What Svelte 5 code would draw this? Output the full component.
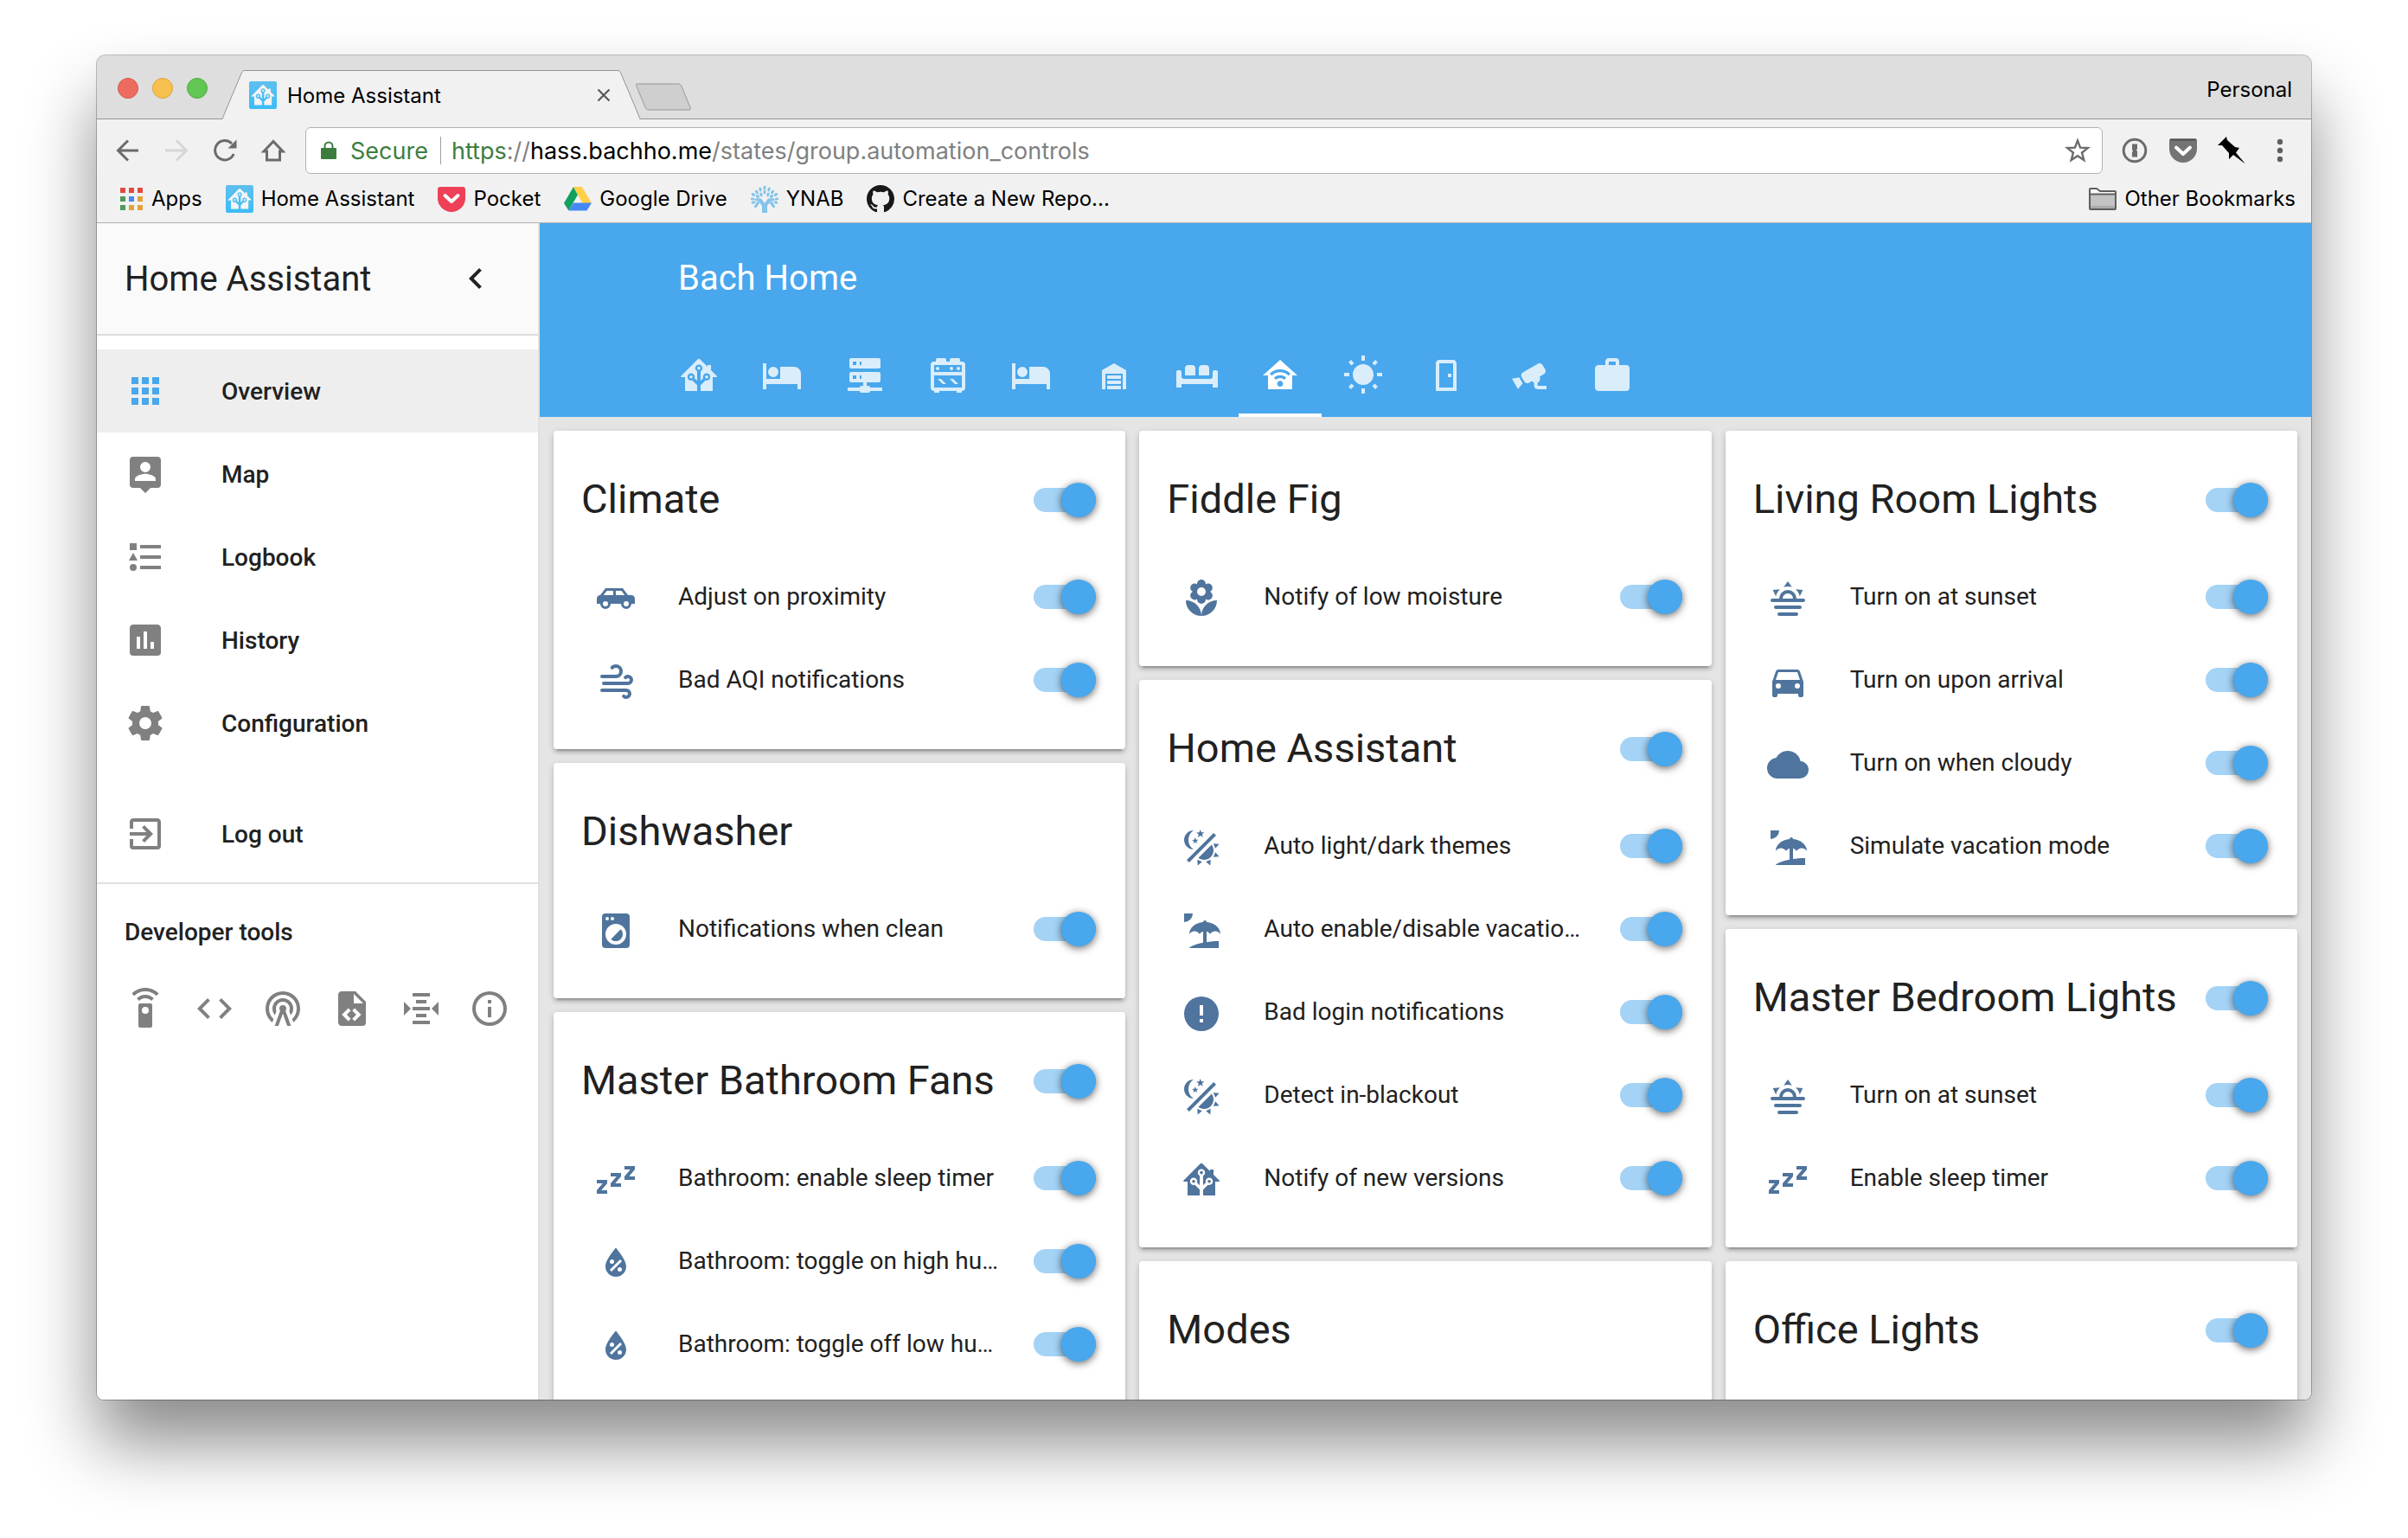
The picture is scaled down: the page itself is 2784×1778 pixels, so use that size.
<script lang="ts">
  type Row = { icon: string; name: string };
  type Card = { title: string; toggle: boolean; rows: Row[] };

  // Icon outlines on a 24 x 24 grid
  const icons: Record<string, string> = {
    chevron: 'M15.41,7.41L14,6L8,12L14,18L15.41,16.59L10.83,12L15.41,7.41Z',
    apps: 'M16,20H20V16H16M16,14H20V10H16M10,8H14V4H10M16,8H20V4H16M10,14H14V10H10M4,14H8V10H4M4,20H8V16H4M10,20H14V16H10M4,8H8V4H4V8Z',
    map: 'M19,2H5A2,2 0 0,0 3,4V18A2,2 0 0,0 5,20H9L12,23L15,20H19A2,2 0 0,0 21,18V4A2,2 0 0,0 19,2M12,5A3,3 0 0,1 15,8A3,3 0 0,1 12,11A3,3 0 0,1 9,8A3,3 0 0,1 12,5M18,16H6V15C6,13 10,11.9 12,11.9C14,11.9 18,13 18,15V16Z',
    logbook: 'M5,9.5L7.5,14H2.5L5,9.5M3,4H7V8H3V4M5,20A2,2 0 0,0 7,18A2,2 0 0,0 5,16A2,2 0 0,0 3,18A2,2 0 0,0 5,20M9,5V7H21V5H9M9,19H21V17H9V19M9,11V13H21V11H9Z',
    history: 'M17,17H15V13H17M13,17H11V7H13M9,17H7V10H9M19,3H5C3.89,3 3,3.89 3,5V19A2,2 0 0,0 5,21H19A2,2 0 0,0 21,19V5C21,3.89 20.1,3 19,3Z',
    settings: 'M12,15.5A3.5,3.5 0 0,1 8.5,12A3.5,3.5 0 0,1 12,8.5A3.5,3.5 0 0,1 15.5,12A3.5,3.5 0 0,1 12,15.5M19.43,12.97C19.47,12.65 19.5,12.33 19.5,12C19.5,11.67 19.47,11.34 19.43,11L21.54,9.37C21.73,9.22 21.78,8.95 21.66,8.73L19.66,5.27C19.54,5.05 19.27,4.96 19.05,5.05L16.56,6.05C16.04,5.66 15.5,5.32 14.87,5.07L14.5,2.42C14.46,2.18 14.25,2 14,2H10C9.75,2 9.54,2.18 9.5,2.42L9.13,5.07C8.5,5.32 7.96,5.66 7.44,6.05L4.95,5.05C4.73,4.96 4.46,5.05 4.34,5.27L2.34,8.73C2.21,8.95 2.27,9.22 2.46,9.37L4.57,11C4.53,11.34 4.5,11.67 4.5,12C4.5,12.33 4.53,12.65 4.57,12.97L2.46,14.63C2.27,14.78 2.21,15.05 2.34,15.27L4.34,18.73C4.46,18.95 4.73,19.03 4.95,18.95L7.44,17.94C7.96,18.34 8.5,18.68 9.13,18.93L9.5,21.58C9.54,21.82 9.75,22 10,22H14C14.25,22 14.46,21.82 14.5,21.58L14.87,18.93C15.5,18.67 16.04,18.34 16.56,17.94L19.05,18.95C19.27,19.03 19.54,18.95 19.66,18.73L21.66,15.27C21.78,15.05 21.73,14.78 21.54,14.63L19.43,12.97Z',
    logout: 'M19,3H5C3.89,3 3,3.89 3,5V9H5V5H19V19H5V15H3V19A2,2 0 0,0 5,21H19A2,2 0 0,0 21,19V5C21,3.89 20.1,3 19,3M10.08,15.58L11.5,17L16.5,12L11.5,7L10.08,8.41L12.67,11H3V13H12.67L10.08,15.58Z',
    remote: 'M12,0C8.96,0 6.21,1.23 4.22,3.22L5.63,4.63C7.26,3 9.5,2 12,2C14.5,2 16.74,3 18.36,4.64L19.77,3.23C17.79,1.23 15.04,0 12,0M7.05,6.05L8.46,7.46C9.37,6.56 10.62,6 12,6C13.38,6 14.63,6.56 15.54,7.46L16.95,6.05C15.68,4.78 13.93,4 12,4C10.07,4 8.32,4.78 7.05,6.05M12,15A2,2 0 0,1 10,13A2,2 0 0,1 12,11A2,2 0 0,1 14,13A2,2 0 0,1 12,15M15,9H9A1,1 0 0,0 8,10V22A1,1 0 0,0 9,23H15A1,1 0 0,0 16,22V10A1,1 0 0,0 15,9Z',
    code: 'M14.6,16.6L19.2,12L14.6,7.4L16,6L22,12L16,18L14.6,16.6M9.4,16.6L4.8,12L9.4,7.4L8,6L2,12L8,18L9.4,16.6Z',
    radio: 'M12,10A2,2 0 0,1 14,12C14,12.5 13.82,12.94 13.53,13.29L16.7,22H14.57L12,14.93L9.43,22H7.3L10.47,13.29C10.18,12.94 10,12.5 10,12A2,2 0 0,1 12,10M12,8A4,4 0 0,0 8,12C8,12.5 8.1,13 8.28,13.46L7.4,15.86C6.53,14.81 6,13.47 6,12A6,6 0 0,1 12,6A6,6 0 0,1 18,12C18,13.47 17.47,14.81 16.6,15.86L15.72,13.46C15.9,13 16,12.5 16,12A4,4 0 0,0 12,8M12,4A8,8 0 0,0 4,12C4,14.36 5,16.5 6.64,17.94L5.92,19.94C3.54,18.11 2,15.23 2,12A10,10 0 0,1 12,2A10,10 0 0,1 22,12C22,15.23 20.46,18.11 18.08,19.94L17.36,17.94C19,16.5 20,14.36 20,12A8,8 0 0,0 12,4Z',
    fileCode: 'M13,9H18.5L13,3.5V9M6,2H14L20,8V20A2,2 0 0,1 18,22H6C4.89,22 4,21.1 4,20V4C4,2.89 4.89,2 6,2M6.12,15.5L9.86,19.24L11.28,17.83L8.95,15.5L11.28,13.17L9.86,11.76L6.12,15.5M17.28,15.5L13.54,11.76L12.12,13.17L14.45,15.5L12.12,17.83L13.54,19.24L17.28,15.5Z',
    mqtt: 'M2,8L6,12L2,16V8M22,8V16L18,12L22,8M7,3H17V5H7V3M9,7H15V9H9V7M7,11H17V13H7V11M9,15H15V17H9V15M7,19H17V21H7V19Z',
    info: 'M11,9H13V7H11M12,20C7.59,20 4,16.41 4,12C4,7.59 7.59,4 12,4C16.41,4 20,7.59 20,12C20,16.41 16.41,20 12,20M12,2A10,10 0 0,0 2,12A10,10 0 0,0 12,22A10,10 0 0,0 22,12A10,10 0 0,0 12,2M11,17H13V11H11V17Z',
    hass: 'M21.8,13H20V21H13V17.67L15.79,14.88L16.5,15C17.66,15 18.6,14.06 18.6,12.9C18.6,11.74 17.66,10.8 16.5,10.8A2.1,2.1 0 0,0 14.4,12.9L14.5,13.61L13,15.13V9.65C13.66,9.29 14.1,8.6 14.1,7.8A2.1,2.1 0 0,0 12,5.7A2.1,2.1 0 0,0 9.9,7.8C9.9,8.6 10.34,9.29 11,9.65V15.13L9.5,13.61L9.6,12.9A2.1,2.1 0 0,0 7.5,10.8A2.1,2.1 0 0,0 5.4,12.9A2.1,2.1 0 0,0 7.5,15L8.21,14.88L11,17.67V21H4V13H2.25C1.83,13 1.42,13 1.42,12.79C1.43,12.57 1.85,12.15 2.28,11.72L11,3C11.33,2.67 11.67,2.33 12,2.33C12.33,2.33 12.67,2.67 13,3L17,7V6H19V9L21.78,11.78C22.18,12.18 22.59,12.59 22.6,12.8C22.6,13 22.2,13 21.8,13M7.5,12A0.9,0.9 0 0,1 8.4,12.9A0.9,0.9 0 0,1 7.5,13.8A0.9,0.9 0 0,1 6.6,12.9A0.9,0.9 0 0,1 7.5,12M16.5,12C17,12 17.4,12.4 17.4,12.9C17.4,13.4 17,13.8 16.5,13.8A0.9,0.9 0 0,1 15.6,12.9A0.9,0.9 0 0,1 16.5,12M12,6.9C12.5,6.9 12.9,7.3 12.9,7.8C12.9,8.3 12.5,8.7 12,8.7C11.5,8.7 11.1,8.3 11.1,7.8C11.1,7.3 11.5,6.9 12,6.9Z',
    bed: 'M19,7H11V14H3V5H1V20H3V17H21V20H23V11A4,4 0 0,0 19,7M7,13A3,3 0 0,0 10,10A3,3 0 0,0 7,7A3,3 0 0,0 4,10A3,3 0 0,0 7,13Z',
    server: 'M13,18H14A1,1 0 0,1 15,19H22V21H15A1,1 0 0,1 14,22H10A1,1 0 0,1 9,21H2V19H9A1,1 0 0,1 10,18H11V16H4A1,1 0 0,1 3,15V11A1,1 0 0,1 4,10H20A1,1 0 0,1 21,11V15A1,1 0 0,1 20,16H13V18M4,2H20A1,1 0 0,1 21,3V7A1,1 0 0,1 20,8H4A1,1 0 0,1 3,7V3A1,1 0 0,1 4,2M9,6H10V4H9V6M9,14H10V12H9V14M5,4V6H7V4H5M5,12V14H7V12H5Z',
    stove: 'M6,14H8L11,17H9L6,14M4,4H5V3A1,1 0 0,1 6,2H10A1,1 0 0,1 11,3V4H13V3A1,1 0 0,1 14,2H18A1,1 0 0,1 19,3V4H20A2,2 0 0,1 22,6V19A2,2 0 0,1 20,21V22H17V21H7V22H4V21A2,2 0 0,1 2,19V6A2,2 0 0,1 4,4M18,7A1,1 0 0,1 19,8A1,1 0 0,1 18,9A1,1 0 0,1 17,8A1,1 0 0,1 18,7M14,7A1,1 0 0,1 15,8A1,1 0 0,1 14,9A1,1 0 0,1 13,8A1,1 0 0,1 14,7M20,6H4V10H20V6M4,19H20V12H4V19M6,7A1,1 0 0,1 7,8A1,1 0 0,1 6,9A1,1 0 0,1 5,8A1,1 0 0,1 6,7M13,14H15L18,17H16L13,14Z',
    garage: 'M19,20H17V11H7V20H5V9L12,5L19,9V20M8,12H16V14H8V12M8,15H16V17H8V15M16,18V20H8V18H16Z',
    sofa: 'M0,10A1,1 0 0,1 1,9H2A1,1 0 0,1 3,10V12.5A1.5,1.5 0 0,0 4.5,14H19.5A1.5,1.5 0 0,0 21,12.5V10A1,1 0 0,1 22,9H23A1,1 0 0,1 24,10V19H21V17H3V19H0V10M5,12V8A2,2 0 0,1 7,6H9A2,2 0 0,1 11,8V12H5M13,12V8A2,2 0 0,1 15,6H17A2,2 0 0,1 19,8V12H13Z',
    automation: 'M12,3L2,12H5V20H19V12H22L12,3M12,8.5C14.34,8.5 16.46,9.43 18,10.94L16.8,12.12C15.58,10.91 13.88,10.17 12,10.17C10.12,10.17 8.42,10.91 7.2,12.12L6,10.94C7.54,9.43 9.66,8.5 12,8.5M12,11.83C13.4,11.83 14.67,12.39 15.6,13.3L14.4,14.47C13.79,13.87 12.94,13.5 12,13.5C11.06,13.5 10.21,13.87 9.6,14.47L8.4,13.3C9.33,12.39 10.6,11.83 12,11.83M12,15.17C12.94,15.17 13.7,15.91 13.7,16.83C13.7,17.75 12.94,18.5 12,18.5C11.06,18.5 10.3,17.75 10.3,16.83C10.3,15.91 11.06,15.17 12,15.17Z',
    sun: 'M3.55,18.54L4.96,19.95L6.76,18.16L5.34,16.74M11,22.45C11.32,22.45 13,22.45 13,22.45V19.5H11M12,5.5A6,6 0 0,0 6,11.5A6,6 0 0,0 12,17.5A6,6 0 0,0 18,11.5C18,8.18 15.31,5.5 12,5.5M20,12.5H23V10.5H20M17.24,18.16L19.04,19.95L20.45,18.54L18.66,16.74M20.45,4.46L19.04,3.05L17.24,4.84L18.66,6.26M13,0.55H11V3.5H13M4,10.5H1V12.5H4M6.76,4.84L4.96,3.05L3.55,4.46L5.34,6.26L6.76,4.84Z',
    door: 'M8,3C6.89,3 6,3.89 6,5V21H18V5C18,3.89 17.11,3 16,3H8M8,5V19H16V5H8M13,11H15V13H13V11Z',
    cctv: 'M18.15,4.94C17.77,4.91 17.37,5 17,5.2L8.35,10.2C7.39,10.76 7.07,12 7.62,12.94L9.12,15.53C9.67,16.5 10.89,16.82 11.85,16.27L13.65,15.23C13.92,15.69 14.32,16.06 14.81,16.27V18.04C14.81,19.13 15.7,20 16.81,20H22V18.04H16.81V16.27C17.72,15.87 18.31,14.97 18.31,14C18.31,13.54 18.19,13.11 17.97,12.73L20.5,11.27C21.47,10.71 21.8,9.5 21.24,8.53L19.74,5.94C19.4,5.34 18.79,5 18.15,4.94M6.22,13.17L2,13.87L2.75,15.17L4.75,18.63L5.5,19.93L8.22,16.63L6.22,13.17Z',
    briefcase: 'M10,2H14A2,2 0 0,1 16,4V6H20A2,2 0 0,1 22,8V19A2,2 0 0,1 20,21H4C2.89,21 2,20.1 2,19V8C2,6.89 2.89,6 4,6H8V4C8,2.89 8.89,2 10,2M14,6V4H10V6H14Z',
    carSide: 'M16,6L19,10H21C22.11,10 23,10.89 23,12V15H21A3,3 0 0,1 18,18A3,3 0 0,1 15,15H9A3,3 0 0,1 6,18A3,3 0 0,1 3,15H1V12C1,10.89 1.89,10 3,10L6,6H16M10.5,7.5H6.75L4.86,10H10.5V7.5M12,7.5V10H17.14L15.25,7.5H12M6,13.5A1.5,1.5 0 0,0 4.5,15A1.5,1.5 0 0,0 6,16.5A1.5,1.5 0 0,0 7.5,15A1.5,1.5 0 0,0 6,13.5M18,13.5A1.5,1.5 0 0,0 16.5,15A1.5,1.5 0 0,0 18,16.5A1.5,1.5 0 0,0 19.5,15A1.5,1.5 0 0,0 18,13.5Z',
    wind: 'M4,10A1,1 0 0,1 3,9A1,1 0 0,1 4,8H12A2,2 0 0,0 14,6A2,2 0 0,0 12,4C11.45,4 10.95,4.22 10.59,4.59C10.2,5 9.56,5 9.17,4.59C8.78,4.2 8.78,3.56 9.17,3.17C9.9,2.45 10.9,2 12,2A4,4 0 0,1 16,6A4,4 0 0,1 12,10H4M19,12A1,1 0 0,0 20,11A1,1 0 0,0 19,10C18.72,10 18.47,10.11 18.29,10.29C17.9,10.68 17.27,10.68 16.88,10.29C16.5,9.9 16.5,9.27 16.88,8.88C17.42,8.34 18.17,8 19,8A3,3 0 0,1 22,11A3,3 0 0,1 19,14H5A1,1 0 0,1 4,13A1,1 0 0,1 5,12H19M18,18H4A1,1 0 0,1 3,17A1,1 0 0,1 4,16H18A3,3 0 0,1 21,19A3,3 0 0,1 18,22C17.17,22 16.42,21.66 15.88,21.12C15.5,20.73 15.5,20.1 15.88,19.71C16.27,19.32 16.9,19.32 17.29,19.71C17.47,19.89 17.72,20 18,20A1,1 0 0,0 19,19A1,1 0 0,0 18,18Z',
    washer: 'M14.83,11.17C16.39,12.73 16.39,15.26 14.83,16.83C13.26,18.39 10.73,18.39 9.17,16.83L14.83,11.17M6,2H18A2,2 0 0,1 20,4V20A2,2 0 0,1 18,22H6A2,2 0 0,1 4,20V4A2,2 0 0,1 6,2M7,4A1,1 0 0,0 6,5A1,1 0 0,0 7,6A1,1 0 0,0 8,5A1,1 0 0,0 7,4M10,4A1,1 0 0,0 9,5A1,1 0 0,0 10,6A1,1 0 0,0 11,5A1,1 0 0,0 10,4M12,8A6,6 0 0,0 6,14A6,6 0 0,0 12,20A6,6 0 0,0 18,14A6,6 0 0,0 12,8Z',
    sleep: 'M23,12H17V10L20.39,6H17V4H23V6L19.62,10H23V12M15,16H9V14L12.39,10H9V8H15V10L11.62,14H15V16M7,20H1V18L4.39,14H1V12H7V14L3.62,18H7V20Z',
    humidity: 'M12,3.25C12,3.25 6,10 6,14C6,17.32 8.69,20 12,20A6,6 0 0,0 18,14C18,10 12,3.25 12,3.25M14.47,9.97L15.53,11.03L9.53,17.03L8.47,15.97M9.75,10A1.25,1.25 0 0,1 11,11.25A1.25,1.25 0 0,1 9.75,12.5A1.25,1.25 0 0,1 8.5,11.25A1.25,1.25 0 0,1 9.75,10M14.25,14.5A1.25,1.25 0 0,1 15.5,15.75A1.25,1.25 0 0,1 14.25,17A1.25,1.25 0 0,1 13,15.75A1.25,1.25 0 0,1 14.25,14.5Z',
    flower: 'M3,13A9,9 0 0,0 12,22C12,17 7.97,13 3,13M12,5.5A2.5,2.5 0 0,1 14.5,8A2.5,2.5 0 0,1 12,10.5A2.5,2.5 0 0,1 9.5,8A2.5,2.5 0 0,1 12,5.5M5.6,10.25A2.5,2.5 0 0,0 8.1,12.75C8.63,12.75 9.12,12.58 9.5,12.31C9.5,12.37 9.5,12.43 9.5,12.5A2.5,2.5 0 0,0 12,15A2.5,2.5 0 0,0 14.5,12.5C14.5,12.43 14.5,12.37 14.5,12.31C14.88,12.58 15.37,12.75 15.9,12.75C17.28,12.75 18.4,11.63 18.4,10.25C18.4,9.25 17.81,8.4 16.97,8C17.81,7.6 18.4,6.74 18.4,5.75C18.4,4.37 17.28,3.25 15.9,3.25C15.37,3.25 14.88,3.41 14.5,3.69C14.5,3.63 14.5,3.56 14.5,3.5A2.5,2.5 0 0,0 12,1A2.5,2.5 0 0,0 9.5,3.5C9.5,3.56 9.5,3.63 9.5,3.69C9.12,3.41 8.63,3.25 8.1,3.25A2.5,2.5 0 0,0 5.6,5.75C5.6,6.74 6.19,7.6 7.03,8C6.19,8.4 5.6,9.25 5.6,10.25M12,22A9,9 0 0,0 21,13C16,13 12,17 12,22Z',
    theme: 'M7.5,2C5.71,3.15 4.5,5.18 4.5,7.5C4.5,9.82 5.71,11.85 7.53,13C4.46,13 2,10.54 2,7.5A5.5,5.5 0 0,1 7.5,2M19.07,3.5L20.5,4.93L4.93,20.5L3.5,19.07L19.07,3.5M12.89,5.93L11.41,5L9.97,6L10.39,4.3L9,3.24L10.75,3.12L11.33,1.47L12,3.1L13.73,3.13L12.38,4.26L12.89,5.93M9.59,9.54L8.43,8.81L7.31,9.59L7.65,8.27L6.56,7.44L7.92,7.35L8.37,6.06L8.88,7.33L10.24,7.36L9.19,8.23L9.59,9.54M19,13.5A5.5,5.5 0 0,1 13.5,19C12.28,19 11.15,18.6 10.24,17.93L17.93,10.24C18.6,11.15 19,12.28 19,13.5M14.6,20.08L17.37,18.93L17.13,22.28L14.6,20.08M18.93,17.38L20.08,14.61L22.28,17.15L18.93,17.38M20.08,12.42L18.94,9.64L22.28,9.88L20.08,12.42M9.63,18.93L12.4,20.08L9.87,22.27L9.63,18.93Z',
    beach: 'M15,18.54C17.13,18.21 19.5,18 22,18V22H5C5,21.35 8.2,19.86 13,18.9V12.4C12.16,12.65 11.45,13.21 11,13.95C10.39,12.93 9.27,12.25 8,12.25C6.73,12.25 5.61,12.93 5,13.95C5.03,10.37 8.5,7.43 13,7.04V7A1,1 0 0,1 14,6A1,1 0 0,1 15,7V7.04C19.5,7.43 22.96,10.37 23,13.95C22.39,12.93 21.27,12.25 20,12.25C18.73,12.25 17.61,12.93 17,13.95C16.55,13.21 15.84,12.65 15,12.39V18.54M7,2A5,5 0 0,1 2,7V2H7Z',
    alert: 'M13,13H11V7H13M13,17H11V15H13M12,2A10,10 0 0,0 2,12A10,10 0 0,0 12,22A10,10 0 0,0 22,12A10,10 0 0,0 12,2Z',
    sunset: 'M3,12H7A5,5 0 0,1 12,7A5,5 0 0,1 17,12H21A1,1 0 0,1 22,13A1,1 0 0,1 21,14H3A1,1 0 0,1 2,13A1,1 0 0,1 3,12M5,16H19A1,1 0 0,1 20,17A1,1 0 0,1 19,18H5A1,1 0 0,1 4,17A1,1 0 0,1 5,16M17,20A1,1 0 0,1 18,21A1,1 0 0,1 17,22H7A1,1 0 0,1 6,21A1,1 0 0,1 7,20H17M15,12A3,3 0 0,0 12,9A3,3 0 0,0 9,12H15M12,2L14.39,5.42C13.65,5.15 12.84,5 12,5C11.16,5 10.35,5.15 9.61,5.42L12,2M3.34,7L7.5,6.65C6.9,7.16 6.36,7.78 5.94,8.5C5.5,9.24 5.25,10 5.11,10.79L3.34,7M20.65,7L18.88,10.79C18.74,10 18.47,9.23 18.05,8.5C17.63,7.78 17.1,7.15 16.5,6.64L20.65,7Z',
    car: 'M5,11L6.5,6.5H17.5L19,11M17.5,16A1.5,1.5 0 0,1 16,14.5A1.5,1.5 0 0,1 17.5,13A1.5,1.5 0 0,1 19,14.5A1.5,1.5 0 0,1 17.5,16M6.5,16A1.5,1.5 0 0,1 5,14.5A1.5,1.5 0 0,1 6.5,13A1.5,1.5 0 0,1 8,14.5A1.5,1.5 0 0,1 6.5,16M18.92,6C18.72,5.42 18.16,5 17.5,5H6.5C5.84,5 5.28,5.42 5.08,6L3,12V20A1,1 0 0,0 4,21H5A1,1 0 0,0 6,20V19H18V20A1,1 0 0,0 19,21H20A1,1 0 0,0 21,20V12L18.92,6Z',
    cloud: 'M19.35,10.03C18.67,6.59 15.64,4 12,4C9.11,4 6.6,5.64 5.35,8.03C2.34,8.36 0,10.9 0,14A6,6 0 0,0 6,20H19A5,5 0 0,0 24,15C24,12.36 21.95,10.22 19.35,10.03Z'
  };

  const menu = [
    { icon: 'apps', label: 'Overview' },
    { icon: 'map', label: 'Map' },
    { icon: 'logbook', label: 'Logbook' },
    { icon: 'history', label: 'History' },
    { icon: 'settings', label: 'Configuration' }
  ];

  const tools = [
    { icon: 'remote', label: 'Services' },
    { icon: 'code', label: 'States' },
    { icon: 'radio', label: 'Events' },
    { icon: 'fileCode', label: 'Templates' },
    { icon: 'mqtt', label: 'MQTT' },
    { icon: 'info', label: 'Info' }
  ];

  const views = [
    { icon: 'hass', label: 'Home' },
    { icon: 'bed', label: 'Bedroom' },
    { icon: 'server', label: 'Network' },
    { icon: 'stove', label: 'Kitchen' },
    { icon: 'bed', label: 'Guest room' },
    { icon: 'garage', label: 'Garage' },
    { icon: 'sofa', label: 'Living room' },
    { icon: 'automation', label: 'Automation controls' },
    { icon: 'sun', label: 'Weather' },
    { icon: 'door', label: 'Doors' },
    { icon: 'cctv', label: 'Cameras' },
    { icon: 'briefcase', label: 'Work' }
  ];

  const columns: Card[][] = [
    [
      {
        title: 'Climate',
        toggle: true,
        rows: [
          { icon: 'carSide', name: 'Adjust on proximity' },
          { icon: 'wind', name: 'Bad AQI notifications' }
        ]
      },
      {
        title: 'Dishwasher',
        toggle: false,
        rows: [{ icon: 'washer', name: 'Notifications when clean' }]
      },
      {
        title: 'Master Bathroom Fans',
        toggle: true,
        rows: [
          { icon: 'sleep', name: 'Bathroom: enable sleep timer' },
          { icon: 'humidity', name: 'Bathroom: toggle on high humidity' },
          { icon: 'humidity', name: 'Bathroom: toggle off low humidity' }
        ]
      }
    ],
    [
      {
        title: 'Fiddle Fig',
        toggle: false,
        rows: [{ icon: 'flower', name: 'Notify of low moisture' }]
      },
      {
        title: 'Home Assistant',
        toggle: true,
        rows: [
          { icon: 'theme', name: 'Auto light/dark themes' },
          { icon: 'beach', name: 'Auto enable/disable vacation mode' },
          { icon: 'alert', name: 'Bad login notifications' },
          { icon: 'theme', name: 'Detect in-blackout' },
          { icon: 'hass', name: 'Notify of new versions' }
        ]
      },
      { title: 'Modes', toggle: false, rows: [] }
    ],
    [
      {
        title: 'Living Room Lights',
        toggle: true,
        rows: [
          { icon: 'sunset', name: 'Turn on at sunset' },
          { icon: 'car', name: 'Turn on upon arrival' },
          { icon: 'cloud', name: 'Turn on when cloudy' },
          { icon: 'beach', name: 'Simulate vacation mode' }
        ]
      },
      {
        title: 'Master Bedroom Lights',
        toggle: true,
        rows: [
          { icon: 'sunset', name: 'Turn on at sunset' },
          { icon: 'sleep', name: 'Enable sleep timer' }
        ]
      },
      { title: 'Office Lights', toggle: true, rows: [] }
    ]
  ];

  const appColors = ['#e04b3f', '#e04b3f', '#e04b3f', '#4f9a5b', '#4688f1', '#e2a33a', '#4f9a5b', '#e2a33a', '#e2a33a'];
  // Leaf positions of the tree logo: x, y, rotation
  const leaves = [
    [16, 3, 0], [11, 5, -20], [21, 5, 20], [7, 8, -40], [25, 8, 40], [16, 8, 0], [12, 11, -20], [20, 11, 20],
    [3, 11, -60], [29, 11, 60], [8, 13, -45], [24, 13, 45], [2, 16, -90], [30, 16, 90], [7, 17, -80], [25, 17, 80],
    [3, 20, -110], [29, 20, 110], [8, 21, -120], [24, 21, 120], [6, 24, -130], [26, 24, 130]
  ];

  let activeView = $state(7);
  let activeMenu = $state('Overview');
  let address = $state('https://hass.bachho.me/states/group.automation_controls');
</script>

{#snippet icon(name: string)}
  <svg class="icon" viewBox="0 0 24 24" aria-hidden="true">
    <path d={icons[name]} fill-rule={['hass', 'washer', 'stove'].includes(name) ? 'nonzero' : 'evenodd'} />
  </svg>
{/snippet}

{#snippet hassLogo()}
  <svg class="fav" viewBox="0 0 32 32" aria-hidden="true">
    <defs>
      <linearGradient id="sky" x1="0" y1="0" x2="0" y2="1">
        <stop offset="0" stop-color="#5fc0ee" />
        <stop offset="1" stop-color="#3cbcf8" />
      </linearGradient>
    </defs>
    <rect width="32" height="32" rx="2" fill="url(#sky)" />
    <path transform="translate(1 1) scale(1.26)" d={icons.hass} fill="#f4f4f4" />
  </svg>
{/snippet}

<div class="desktop">
  <div class="window">
    <header class="strip">
      <div class="lights">
        <button class="light red" aria-label="Close window"></button>
        <button class="light amber" aria-label="Minimise window"></button>
        <button class="light green" aria-label="Zoom window"></button>
      </div>
      <div class="tab">
        <svg class="slope" viewBox="0 0 27 57" aria-hidden="true">
          <path d="M0,57C2,57 2,55 3,52L23,4C24,1 25,0 27,0V57Z" fill="#f1f1f1" />
          <path d="M0,56.5C2,56 2,54 3,51.5L23,4C24,1.5 25,.5 27,.5" fill="none" stroke="#949494" />
        </svg>
        <div class="tab-body">
          {@render hassLogo()}
          <span class="tab-title">Home Assistant</span>
          <button class="tab-close" aria-label="Close tab">
            <svg viewBox="0 0 16 16" aria-hidden="true"><path d="M1.5,1.5L14.5,14.5M14.5,1.5L1.5,14.5" stroke="#5a5a5a" stroke-width="2.2" /></svg>
          </button>
        </div>
        <svg class="slope" viewBox="0 0 27 57" aria-hidden="true">
          <path d="M27,57C25,57 25,55 24,52L4,4C3,1 2,0 0,0V57Z" fill="#f1f1f1" />
          <path d="M27,56.5C25,56 25,54 24,51.5L4,4C3,1.5 2,.5 0,.5" fill="none" stroke="#949494" />
        </svg>
      </div>
      <button class="new-tab" aria-label="New tab">
        <svg viewBox="0 0 66 32" aria-hidden="true">
          <path d="M3,1H50C52,1 53,2 54,4L64,28C65,30 64,31 62,31H16C14,31 13,30 12,28L2,4C1,2 1,1 3,1Z" fill="#cfcfcf" stroke="#979797" />
        </svg>
      </button>
      <button class="profile">Personal</button>
    </header>

    <div class="toolbar">
      <button class="nav" aria-label="Back">
        <svg viewBox="0 0 32 32" aria-hidden="true"><path d="M28,16H5M16,4.5L4.5,16L16,27.5" fill="none" stroke="#6b6b6b" stroke-width="3" /></svg>
      </button>
      <button class="nav" aria-label="Forward">
        <svg viewBox="0 0 32 32" aria-hidden="true"><path d="M3,16H27M16,4.5L27.5,16L16,27.5" fill="none" stroke="#d6d6d6" stroke-width="3" /></svg>
      </button>
      <button class="nav" aria-label="Reload">
        <svg viewBox="0 0 32 32" aria-hidden="true">
          <path d="M26.2,20A11.2,11.2 0 1,1 24,8" fill="none" stroke="#6b6b6b" stroke-width="3" />
          <path d="M29.5,3.5V13.5H19.5Z" fill="#6b6b6b" />
        </svg>
      </button>
      <button class="nav" aria-label="Home">
        <svg viewBox="0 0 32 32" aria-hidden="true"><path d="M16,5.5L5,17H8.5V27H23.5V17H27Z" fill="none" stroke="#6b6b6b" stroke-width="3" /></svg>
      </button>
      <div class="omnibox">
        <svg class="lock" viewBox="0 0 18 22" aria-hidden="true">
          <rect x="0" y="8" width="18" height="13" rx="1" fill="#3c7d3f" />
          <path d="M4.5,9V6A4.5,4.5 0 0,1 13.5,6V9" fill="none" stroke="#3c7d3f" stroke-width="2" />
        </svg>
        <span class="secure">Secure</span>
        <span class="bar"></span>
        <div class="address">
          <span class="url" aria-hidden="true"><span class="scheme">https</span>://<span class="host">hass.bachho.me</span>/states/group.automation_controls</span>
          <input type="text" aria-label="Address" spellcheck="false" bind:value={address} />
        </div>
        <button class="star" aria-label="Bookmark this page">
          <svg viewBox="0 0 32 32" aria-hidden="true"><path d="M16,4.5L19.1,12.6L27.8,13.1L21,18.5L23.3,27L16,22.2L8.7,27L11,18.5L4.2,13.1L12.9,12.6Z" fill="none" stroke="#6b6b6b" stroke-width="2.4" /></svg>
        </button>
      </div>
      <button class="nav" aria-label="Password manager">
        <svg viewBox="0 0 32 32" aria-hidden="true">
          <circle cx="16" cy="16" r="12.8" fill="none" stroke="#6b6b6b" stroke-width="3" />
          <path d="M13,8.5H19V14L18,15.5L19,17V23.5H13V18L14,16.5L13,15Z" fill="#6b6b6b" />
        </svg>
      </button>
      <button class="nav" aria-label="Save to Pocket">
        <svg viewBox="0 0 32 32" aria-hidden="true">
          <path d="M2,2.5H30A2,2 0 0,1 32,4.5V14A16,16 0 0,1 0,14V4.5A2,2 0 0,1 2,2.5Z" fill="#747474" />
          <path d="M1,3.5H31" stroke="#4c4c4c" stroke-width="2" />
          <path d="M8,12.5L16,20L24,12.5" fill="none" stroke="#fff" stroke-width="4" stroke-linecap="round" stroke-linejoin="round" />
        </svg>
      </button>
      <button class="nav" aria-label="Pinboard">
        <svg viewBox="0 0 32 32" aria-hidden="true"><path d="M10,0L11,4L20,12L25,13L21,18.5L32,31.5L18,21L13,26V19L5,10L0,10Z" fill="#000" /></svg>
      </button>
      <button class="nav" aria-label="Browser menu">
        <svg viewBox="0 0 32 32" aria-hidden="true" fill="#5f5f5f"><circle cx="16" cy="6" r="3.2" /><circle cx="16" cy="16" r="3.2" /><circle cx="16" cy="26" r="3.2" /></svg>
      </button>
    </div>

    <nav class="bookmarks" aria-label="Bookmarks">
      <a href="#apps">
        <svg class="apps" viewBox="0 0 28 28" aria-hidden="true">
          {#each appColors as color, i}
            <rect x={1 + (i % 3) * 10} y={1 + Math.floor(i / 3) * 10} width="6" height="6" fill={color} />
          {/each}
        </svg>
        Apps
      </a>
      <a href="#home-assistant">{@render hassLogo()}Home Assistant</a>
      <a href="#pocket">
        <svg class="fav" viewBox="0 0 32 32" aria-hidden="true">
          <path d="M3,2H29A3,3 0 0,1 32,5V15A16,16 0 0,1 0,15V5A3,3 0 0,1 3,2Z" fill="#ee4056" />
          <path d="M8.5,12L16,19L23.5,12" fill="none" stroke="#fff" stroke-width="4" stroke-linecap="round" stroke-linejoin="round" />
        </svg>
        Pocket
      </a>
      <a href="#drive">
        <svg class="fav" viewBox="0 0 32 32" aria-hidden="true">
          <path d="M11,2L0,21L5.5,29.5L16,11Z" fill="#11a15f" />
          <path d="M11,2H21L32,21H21.5Z" fill="#ffcf48" />
          <path d="M11,20.5H32L26.5,29.5H5.5Z" fill="#4587f4" />
        </svg>
        Google Drive
      </a>
      <a href="#ynab">
        <svg class="fav" viewBox="0 0 32 32" aria-hidden="true" fill="#85c3e9">
          {#each leaves as [x, y, r]}
            <ellipse cx={x} cy={y} rx="1.6" ry="2.5" transform="rotate({r} {x} {y})" />
          {/each}
          <path d="M7,15.5H12L16,21L20,15.5H25L19,24V32H13V24Z" />
        </svg>
        YNAB
      </a>
      <a href="#github">
        <svg class="fav" viewBox="0 0 16 16" aria-hidden="true">
          <path fill="#191717" d="M8 0C3.58 0 0 3.58 0 8c0 3.54 2.29 6.53 5.47 7.59.4.07.55-.17.55-.38 0-.19-.01-.82-.01-1.49-2.01.37-2.53-.49-2.69-.94-.09-.23-.48-.94-.82-1.13-.28-.15-.68-.52-.01-.53.63-.01 1.08.58 1.23.82.72 1.21 1.87.87 2.33.66.07-.52.28-.87.51-1.07-1.78-.2-3.64-.89-3.64-3.95 0-.87.31-1.59.82-2.15-.08-.2-.36-1.02.08-2.12 0 0 .67-.21 2.2.82.64-.18 1.32-.27 2-.27.68 0 1.36.09 2 .27 1.53-1.04 2.2-.82 2.2-.82.44 1.1.16 1.92.08 2.12.51.56.82 1.27.82 2.15 0 3.07-1.87 3.75-3.65 3.95.29.25.54.73.54 1.48 0 1.07-.01 1.93-.01 2.2 0 .21.15.46.55.38A8.013 8.013 0 0016 8c0-4.42-3.58-8-8-8z" />
        </svg>
        Create a New Repo...
      </a>
      <button class="other">
        <svg class="fav" viewBox="0 0 32 32" aria-hidden="true">
          <path d="M1,27V5A1,1 0 0,1 2,4H10L13,7H30A1,1 0 0,1 31,8V27A1,1 0 0,1 30,28H2A1,1 0 0,1 1,27Z" fill="#fafafa" />
          <path d="M2,11H30V27H2Z" fill="#c3c3c3" />
          <path d="M2,24H30V27H2Z" fill="#a9a9a9" />
          <path d="M1,10.5H31M1,27V5A1,1 0 0,1 2,4H9L13,7H30A1,1 0 0,1 31,8V27A1,1 0 0,1 30,28H2A1,1 0 0,1 1,27Z" fill="none" stroke="#5e5e5e" stroke-width="2" />
        </svg>
        Other Bookmarks
      </button>
    </nav>

    <div class="app">
      <aside class="sidebar">
        <div class="brand">
          <span>Home Assistant</span>
          <button class="collapse" aria-label="Collapse sidebar">{@render icon('chevron')}</button>
        </div>
        <nav class="menu" aria-label="Main">
          {#each menu as item}
            <a
              href="#{item.label.toLowerCase()}"
              class:active={activeMenu === item.label}
              onclick={() => (activeMenu = item.label)}
            >
              {@render icon(item.icon)}
              {item.label}
            </a>
          {/each}
          <a href="#logout" class="logout">{@render icon('logout')} Log out</a>
        </nav>
        <section class="dev">
          <h2>Developer tools</h2>
          <div class="tools">
            {#each tools as tool}
              <a href="#{tool.label.toLowerCase()}" aria-label={tool.label}>{@render icon(tool.icon)}</a>
            {/each}
          </div>
        </section>
      </aside>

      <main>
        <header class="app-header">
          <h1>Bach Home</h1>
          <div class="views" role="tablist">
            {#each views as view, i}
              <button
                role="tab"
                aria-label={view.label}
                aria-selected={activeView === i}
                class:selected={activeView === i}
                onclick={() => (activeView = i)}
              >
                {@render icon(view.icon)}
              </button>
            {/each}
          </div>
        </header>

        <div class="board">
          {#each columns as column}
            <div class="column">
              {#each column as card}
                <section class="card">
                  {#if card.toggle}
                    <label class="card-head">
                      <span class="card-title">{card.title}</span>
                      <input class="toggle" type="checkbox" checked />
                    </label>
                  {:else}
                    <div class="card-head"><span class="card-title">{card.title}</span></div>
                  {/if}
                  {#each card.rows as row}
                    <label class="row">
                      <span class="badge">{@render icon(row.icon)}</span>
                      <span class="name">{row.name}</span>
                      <input class="toggle" type="checkbox" checked />
                    </label>
                  {/each}
                </section>
              {/each}
            </div>
          {/each}
        </div>
      </main>
    </div>
  </div>
</div>

<style>
  :global(body) {
    margin: 0;
    background: #fff;
  }

  button {
    border: 0;
    padding: 0;
    margin: 0;
    background: none;
    font: inherit;
    color: inherit;
    cursor: pointer;
  }

  a {
    color: inherit;
    text-decoration: none;
  }

  svg {
    display: block;
    flex: none;
  }

  .icon {
    width: 48px;
    height: 48px;
    fill: currentColor;
  }

  .desktop {
    box-sizing: border-box;
    height: 100vh;
    padding: 64px 112px 160px;
    overflow: hidden;
  }

  .window {
    display: flex;
    flex-direction: column;
    height: 100%;
    border-radius: 10px 10px 8px 8px;
    overflow: hidden;
    background: #f1f1f1;
    box-shadow:
      0 0 0 1px rgba(0, 0, 0, 0.25),
      0 50px 80px rgba(0, 0, 0, 0.46);
    font-family: Inter, 'Liberation Sans', sans-serif;
    font-size: 24px;
    color: #000;
  }

  /* Tab strip */
  .strip {
    display: flex;
    flex: none;
    align-items: flex-end;
    height: 73px;
    background: #dedede;
    border-bottom: 1px solid #949494;
  }

  .lights {
    display: flex;
    gap: 16px;
    width: 120px;
    padding: 0 0 23px 24px;
  }

  .light {
    box-sizing: border-box;
    width: 24px;
    height: 24px;
    border-radius: 50%;
  }

  .red {
    background: #ed6b60;
    border: 1px solid #d8564b;
  }

  .amber {
    background: #f6c04f;
    border: 1px solid #dca63a;
  }

  .green {
    background: #62c655;
    border: 1px solid #4dae3f;
  }

  .tab {
    display: flex;
    height: 57px;
    margin-bottom: -1px;
  }

  .slope {
    width: 27px;
    height: 57px;
  }

  .tab-body {
    box-sizing: border-box;
    display: flex;
    align-items: center;
    width: 431px;
    padding: 0 8px 0 5px;
    background: #f1f1f1;
    border-top: 1px solid #949494;
  }

  .fav {
    width: 32px;
    height: 32px;
  }

  .tab-title {
    flex: 1;
    padding-left: 12px;
  }

  .tab-close svg {
    width: 16px;
    height: 16px;
  }

  .new-tab {
    margin: 0 0 9px -7px;
  }

  .new-tab svg {
    width: 66px;
    height: 32px;
  }

  .profile {
    margin: 0 22px 19px auto;
  }

  /* Toolbar */
  .toolbar {
    box-sizing: border-box;
    display: flex;
    flex: none;
    align-items: center;
    height: 64px;
    padding: 9px 8px 1px;
  }

  .nav {
    display: flex;
    justify-content: center;
    width: 56px;
  }

  .nav svg,
  .star svg {
    width: 32px;
    height: 32px;
  }

  .omnibox {
    box-sizing: border-box;
    display: flex;
    flex: 1;
    align-items: center;
    height: 54px;
    margin: 0 9px;
    padding: 0 12px 0 17px;
    background: #fff;
    border: 1px solid #b2b2b2;
    border-radius: 6px;
    font-size: 27px;
  }

  .lock {
    width: 18px;
    height: 22px;
  }

  .secure {
    padding-left: 16px;
    color: #3c7d3f;
  }

  .bar {
    width: 1px;
    height: 32px;
    margin: 0 12px 0 14px;
    background: #9e9e9e;
  }

  .address {
    display: grid;
    flex: 1;
    align-items: center;
  }

  .address > * {
    grid-area: 1 / 1;
  }

  .address input {
    width: 100%;
    border: 0;
    padding: 0;
    outline: 0;
    background: none;
    font: inherit;
    color: transparent;
    caret-color: #000;
  }

  .url {
    color: #808080;
    white-space: nowrap;
  }

  .scheme {
    color: #3c7d3f;
  }

  .host {
    color: #000;
  }

  /* Bookmarks */
  .bookmarks {
    box-sizing: border-box;
    display: flex;
    flex: none;
    align-items: center;
    gap: 27px;
    height: 56px;
    padding: 0 18px 0 26px;
    border-bottom: 1px solid #b0b0b0;
  }

  .bookmarks a,
  .other {
    display: flex;
    align-items: center;
    gap: 9px;
    white-space: nowrap;
  }

  .apps {
    width: 28px;
    height: 28px;
  }

  .other {
    margin-left: auto;
  }

  /* Application */
  .app {
    display: flex;
    flex: 1;
    min-height: 0;
    font-family: Roboto, 'Liberation Sans', sans-serif;
    color: #212121;
  }

  .sidebar {
    box-sizing: border-box;
    flex: none;
    width: 512px;
    background: #fff;
    border-right: 2px solid #e0e0e0;
  }

  .brand {
    display: flex;
    align-items: center;
    justify-content: space-between;
    height: 128px;
    padding: 0 48px 0 32px;
    background: #fafafa;
    border-bottom: 2px solid #dcdcdc;
    font-size: 40px;
  }

  .menu {
    padding: 16px 0 8px;
    border-bottom: 2px solid #e0e0e0;
    font-size: 28px;
    font-weight: 500;
  }

  .menu a {
    display: flex;
    align-items: center;
    gap: 64px;
    height: 96px;
    padding: 0 32px;
  }

  .menu .icon,
  .tools .icon {
    color: #808080;
  }

  .menu .active {
    background: #eee;
  }

  .menu .active .icon {
    color: #48a7ed;
  }

  .menu .logout {
    margin-top: 32px;
  }

  .dev h2 {
    margin: 0;
    padding: 40px 32px 48px;
    font-size: 28px;
    font-weight: 500;
    line-height: 32px;
  }

  .tools {
    display: flex;
    padding: 0 16px;
  }

  .tools a {
    display: flex;
    flex: 1;
    justify-content: center;
  }

  main {
    flex: 1;
    min-width: 0;
    background: #e5e5e5;
  }

  .app-header {
    background: #48a7ed;
    color: #fff;
  }

  h1 {
    margin: 0;
    padding-left: 160px;
    font-size: 40px;
    font-weight: 400;
    line-height: 128px;
  }

  .views {
    display: flex;
    padding-left: 136px;
  }

  .views button {
    box-sizing: border-box;
    display: flex;
    align-items: center;
    justify-content: center;
    width: 96px;
    height: 96px;
    border: solid transparent;
    border-width: 4px 0;
  }

  .views .icon {
    opacity: 0.8;
  }

  .views .selected {
    border-bottom-color: #fff;
  }

  .views .selected .icon {
    opacity: 1;
  }

  .board {
    display: grid;
    grid-template-columns: repeat(3, minmax(0, 1fr));
    gap: 16px;
    padding: 16px;
  }

  .column {
    display: flex;
    flex-direction: column;
    gap: 16px;
  }

  .card {
    padding-bottom: 32px;
    background: #fff;
    border-radius: 4px;
    box-shadow:
      0 4px 4px rgba(0, 0, 0, 0.14),
      0 2px 10px rgba(0, 0, 0, 0.12),
      0 6px 2px -4px rgba(0, 0, 0, 0.2);
  }

  .card-head {
    display: flex;
    align-items: center;
    justify-content: space-between;
    height: 64px;
    padding: 48px 34px 32px 32px;
    font-size: 47px;
    white-space: nowrap;
  }

  .card-title {
    padding-bottom: 4px;
  }

  .row {
    display: flex;
    align-items: center;
    height: 96px;
    padding: 0 34px 0 32px;
    font-size: 28px;
  }

  .badge {
    display: flex;
    justify-content: center;
    width: 80px;
    padding-top: 4px;
    color: #4f749d;
  }

  .name {
    flex: 1;
    margin: 0 36px 0 32px;
    overflow: hidden;
    text-overflow: ellipsis;
    white-space: nowrap;
    line-height: 40px;
  }

  .toggle {
    display: flex;
    flex: none;
    align-items: center;
    width: 72px;
    height: 28px;
    margin: 0;
    border-radius: 14px;
    background: #bdbdbd;
    appearance: none;
    cursor: pointer;
  }

  .toggle::before {
    content: '';
    width: 40px;
    height: 40px;
    border-radius: 50%;
    background: #fafafa;
    box-shadow: 0 2px 10px rgba(0, 0, 0, 0.6);
  }

  .toggle:checked {
    justify-content: flex-end;
    background: #a4d3f6;
  }

  .toggle:checked::before {
    background: #48a7ed;
  }
</style>
